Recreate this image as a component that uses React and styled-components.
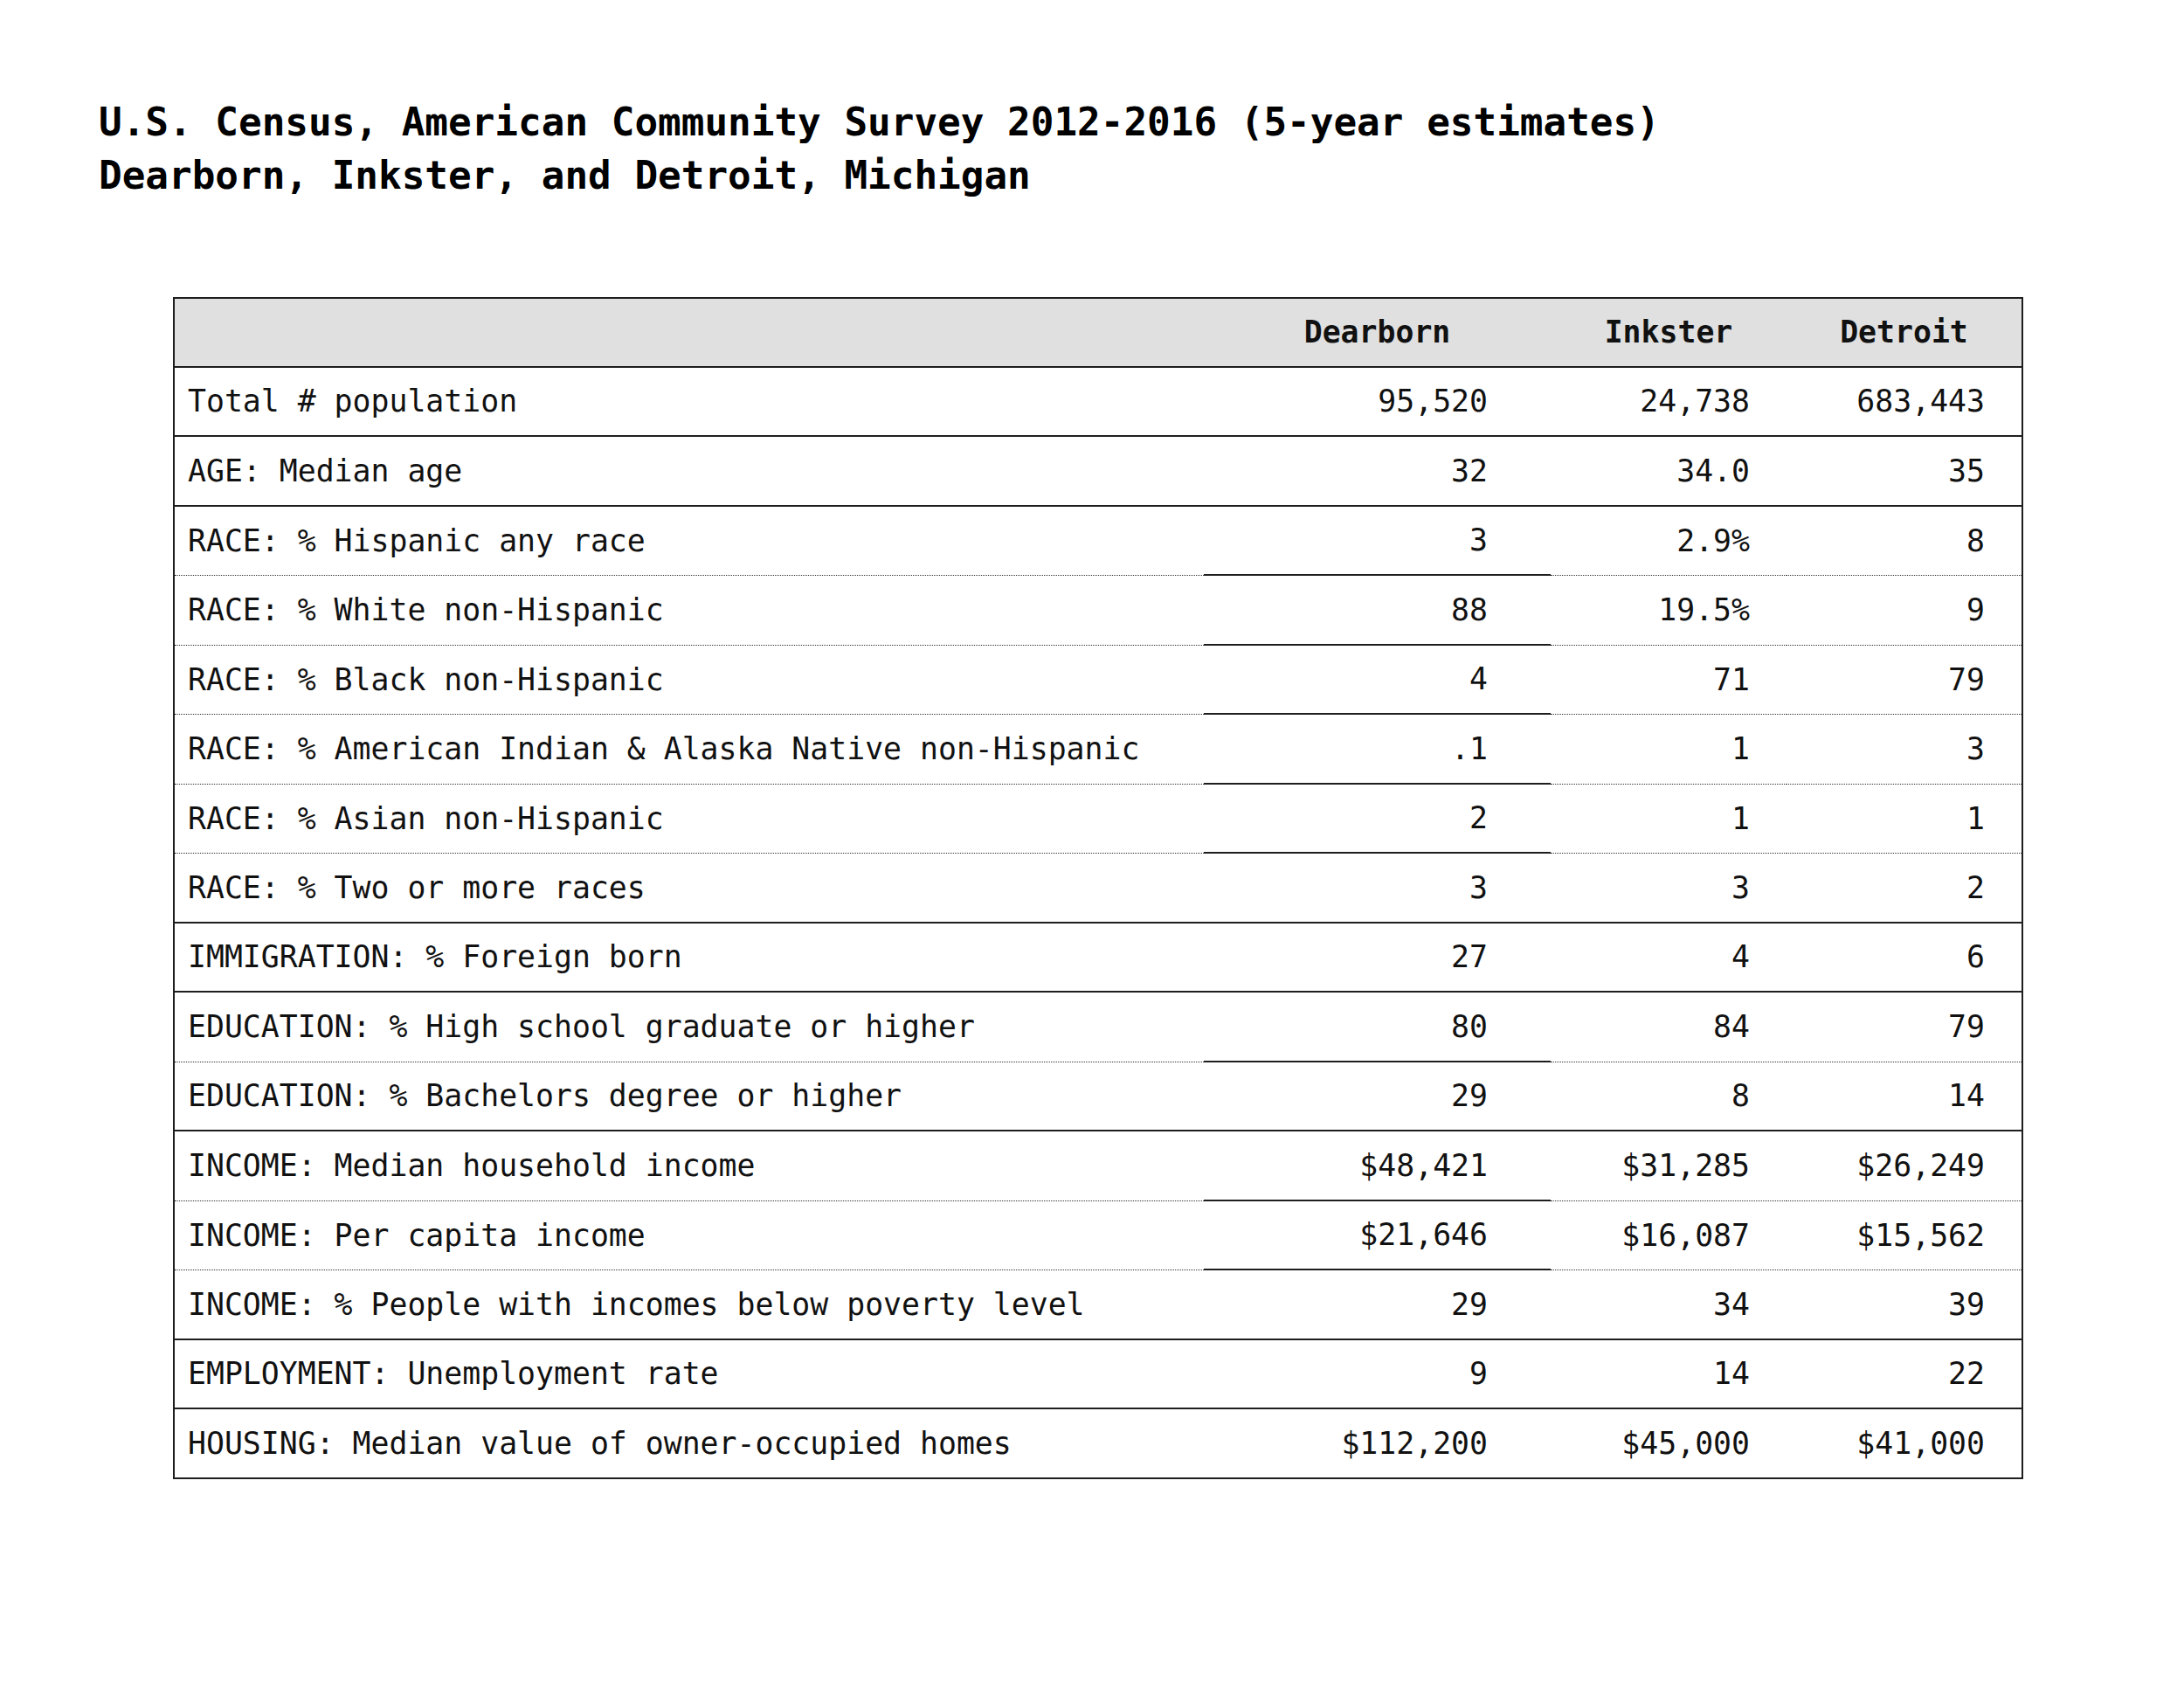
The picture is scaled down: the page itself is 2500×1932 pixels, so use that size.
import React from 'react';
import styled, { createGlobalStyle } from 'styled-components';

const GlobalStyle = createGlobalStyle`
  html, body {
    margin: 0;
    padding: 0;
    background: #ffffff;
  }
  body {
    font-family: "DejaVu Sans Mono", "Liberation Mono", monospace;
    color: #111111;
  }
`;

const Page = styled.div`
  width: 2500px;
  height: 1932px;
  box-sizing: border-box;
  padding: 109px 0 0 113px;
  background: #ffffff;
`;

const Title = styled.h1`
  margin: 0;
  font-family: "DejaVu Sans Mono", monospace;
  font-size: 44.3px;
  line-height: 61px;
  font-weight: bold;
  color: #000000;
`;

const TitleLine = styled.div`
  white-space: nowrap;
`;

const Table = styled.div`
  margin: 109px 0 0 85px;
  width: 2118px;
  box-sizing: border-box;
  border: 2px solid #1e1e1e;
  display: flex;
  flex-direction: column;
`;

const Row = styled.div`
  display: grid;
  grid-template-columns: 1178px 397px 270px 1fr;
  height: ${(p) => p.$height}px;
  background: ${(p) => (p.$header ? '#e0e0e0' : '#ffffff')};
`;

const borderFor = (line) => {
  if (line === 'none') return 'none';
  if (line === 'dotted') return '1.5px dotted #333333';
  return '2px solid #1e1e1e';
};

const Cell = styled.div`
  display: flex;
  align-items: center;
  justify-content: ${(p) => p.$justify};
  box-sizing: border-box;
  padding: 0 ${(p) => p.$padRight}px 0 ${(p) => p.$padLeft}px;
  border-bottom: ${(p) => borderFor(p.$line)};
  font-family: "DejaVu Sans Mono", monospace;
  font-size: 34.8px;
  font-weight: ${(p) => (p.$bold ? 'bold' : 'normal')};
  color: #111111;
  white-space: nowrap;
`;

const columns = [
  { key: 'dearborn', name: 'Dearborn', padRight: 72 },
  { key: 'inkster', name: 'Inkster', padRight: 42 },
  { key: 'detroit', name: 'Detroit', padRight: 42 },
];

const rows = [
  { label: 'Total # population', values: ['95,520', '24,738', '683,443'], line: 'solid' },
  { label: 'AGE: Median age', values: ['32', '34.0', '35'], line: 'solid' },
  { label: 'RACE: % Hispanic any race', values: ['3', '2.9%', '8'], line: 'dotted' },
  { label: 'RACE: % White non-Hispanic', values: ['88', '19.5%', '9'], line: 'dotted' },
  { label: 'RACE: % Black non-Hispanic', values: ['4', '71', '79'], line: 'dotted' },
  { label: 'RACE: % American Indian & Alaska Native non-Hispanic', values: ['.1', '1', '3'], line: 'dotted' },
  { label: 'RACE: % Asian non-Hispanic', values: ['2', '1', '1'], line: 'dotted' },
  { label: 'RACE: % Two or more races', values: ['3', '3', '2'], line: 'solid' },
  { label: 'IMMIGRATION: % Foreign born', values: ['27', '4', '6'], line: 'solid' },
  { label: 'EDUCATION: % High school graduate or higher', values: ['80', '84', '79'], line: 'dotted' },
  { label: 'EDUCATION: % Bachelors degree or higher', values: ['29', '8', '14'], line: 'solid' },
  { label: 'INCOME: Median household income', values: ['$48,421', '$31,285', '$26,249'], line: 'dotted' },
  { label: 'INCOME: Per capita income', values: ['$21,646', '$16,087', '$15,562'], line: 'dotted' },
  { label: 'INCOME: % People with incomes below poverty level', values: ['29', '34', '39'], line: 'solid' },
  { label: 'EMPLOYMENT: Unemployment rate', values: ['9', '14', '22'], line: 'solid' },
  { label: 'HOUSING: Median value of owner-occupied homes', values: ['$112,200', '$45,000', '$41,000'], line: 'none' },
];

const App = () => {
  return (
    <>
      <GlobalStyle />
      <Page>
        <Title>
          <TitleLine>U.S. Census, American Community Survey 2012-2016 (5-year estimates)</TitleLine>
          <TitleLine>Dearborn, Inkster, and Detroit, Michigan</TitleLine>
        </Title>

        <Table>
          <Row $header $height={78.5}>
            <Cell $justify="flex-start" $padLeft={15} $padRight={0} $line="solid" />
            {columns.map((c) => (
              <Cell key={c.key} $justify="center" $padLeft={0} $padRight={0} $line="solid" $bold>
                {c.name}
              </Cell>
            ))}
          </Row>
          {rows.map((r, i) => (
            <Row key={r.label} $height={i === rows.length - 1 ? 77.5 : 79.5}>
              <Cell $justify="flex-start" $padLeft={15} $padRight={0} $line={r.line}>
                {r.label}
              </Cell>
              {r.values.map((v, j) => (
                <Cell
                  key={columns[j].key}
                  $justify="flex-end"
                  $padLeft={0}
                  $padRight={columns[j].padRight}
                  $line={j === 0 && r.line === 'dotted' ? 'solid' : r.line}
                >
                  {v}
                </Cell>
              ))}
            </Row>
          ))}
        </Table>
      </Page>
    </>
  );
};

export default App;
